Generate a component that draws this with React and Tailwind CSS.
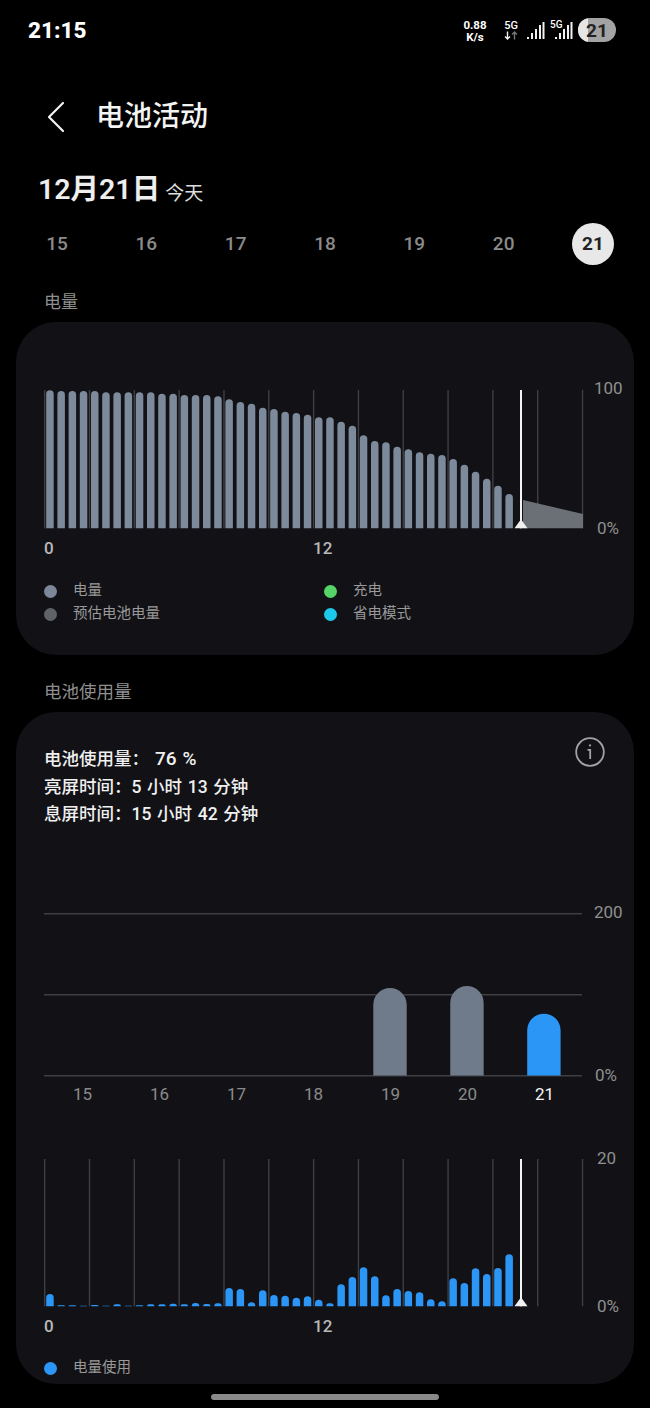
const levelTops = [60, 62, 62, 62, 62, 66, 66, 66, 66, 66, 70, 70, 74, 74, 74, 78, 87, 95, 100, 112, 116, 124, 128, 133, 141, 141, 154, 166, 195, 212, 216, 229, 237, 246, 250, 254, 266, 283, 304, 325, 346, 371];
const usageTops = [433, 467, 467, 468, 466, 468, 464, 468, 467, 464, 464, 462, 464, 460, 463, 461, 415, 418, 458, 422, 436, 438, 444, 440, 450, 461, 404, 382, 353, 380, 437, 418, 424, 428, 449, 455, 386, 400, 356, 373, 355, 314];
const days = ["15", "16", "17", "18", "19", "20"];
const weekBars = [
  { label: "15" },
  { label: "16" },
  { label: "17" },
  { label: "18" },
  { label: "19", top: 76, color: "#6f7b8b" },
  { label: "20", top: 74, color: "#6f7b8b" },
  { label: "21", top: 101.7, color: "#2b96f5" },
];

// rounded top bar, x/base in svg coords
function barPath(x, w, top, base) {
  const r = Math.min(w / 2, base - top);
  return `M${x} ${base}V${top + r}A${r} ${r} 0 0 1 ${x + r} ${top}H${x + w - r}A${r} ${r} 0 0 1 ${x + w} ${top + r}V${base}Z`;
}

function Signal() {
  return (
    <svg width="18" height="18" viewBox="0 0 18 18" fill="#f2f2f2">
      <rect x="0" y="15" width="2" height="2" />
      <rect x="4" y="11" width="2" height="6" />
      <rect x="8" y="7" width="2" height="10" />
      <rect x="12" y="3" width="2" height="14" />
      <rect x="15.5" y="0" width="2" height="17" />
    </svg>
  );
}

function StatusBar() {
  return (
    <div className="flex h-[60px] items-center justify-between pl-[28px] pr-[34px]">
      <span className="text-[22.5px] font-extrabold leading-none text-white">21:15</span>
      <div className="flex items-center">
        <div className="mt-[1px] flex w-[30px] flex-col items-center text-[11.5px] font-bold leading-[12px] text-white">
          <span>0.88</span>
          <span>K/s</span>
        </div>
        <div className="ml-[14px] flex w-[14px] flex-col items-center">
          <span className="text-[11px] font-medium leading-[11px] text-white">5G</span>
          <svg width="14" height="9" viewBox="0 0 14 9" fill="none" strokeWidth="1.4">
            <path d="M3.5 0.5V8M1 5.5L3.5 8L6 5.5" stroke="#f2f2f2" />
            <path d="M10.5 8.5V1M8 3.5L10.5 1L13 3.5" stroke="#777" />
          </svg>
        </div>
        <div className="ml-[9px] mt-[2px]">
          <Signal />
        </div>
        <div className="relative ml-[10px] mt-[2px] w-[18px]">
          <span className="absolute -left-[5px] -top-[2px] text-[10px] font-medium leading-[10px] text-white">5G</span>
          <Signal />
        </div>
        <div className="relative ml-[5px] flex h-[24px] w-[38px] items-center justify-center overflow-hidden rounded-full bg-[#a3a3a3]">
          <div className="absolute inset-y-0 left-0 w-[10px] bg-[#e6e6e6]" />
          <span className="relative text-[19px] font-bold leading-none text-[#222]">21</span>
        </div>
      </div>
    </div>
  );
}

function LevelChart() {
  const base = 138.3;
  return (
    <svg width="545" height="142" viewBox="0 0 545 142" className="block">
      {Array.from({ length: 13 }, (_, i) => (
        <rect key={i} x={i * 44.82} y="0" width="1.4" height={base} fill="#3f3f43" />
      ))}
      <path d={`M479 ${110}L539 ${124}V${base}H479Z`} fill="#6b7077" />
      {levelTops.map((t, i) => (
        <path key={i} d={barPath(2.2 + i * 11.2, 7.5, (t - 60) / 3 + 0.3, base)} fill="#7c8a9b" />
      ))}
      <rect x="476" y="-1" width="2" height={base + 1} fill="#f4f4f4" />
      <path d={`M470.5 ${base}L477 ${base - 9}L483.5 ${base}Z`} fill="#f0f0f0" />
    </svg>
  );
}

function UsageChart() {
  const base = 147.3;
  return (
    <svg width="545" height="149" viewBox="0 0 545 149" className="block">
      {Array.from({ length: 13 }, (_, i) => (
        <rect key={i} x={i * 44.82} y="0" width="1.4" height={base} fill="#3f3f43" />
      ))}
      {usageTops.map((t, i) => (
        <path key={i} d={barPath(2.2 + i * 11.2, 7.5, (t - 28) / 3, base)} fill="#2b96f5" />
      ))}
      <rect x="476" y="0" width="2" height={base} fill="#f4f4f4" />
      <path d={`M470.5 ${base}L477 ${base - 9}L483.5 ${base}Z`} fill="#f0f0f0" />
    </svg>
  );
}

function WeekChart() {
  return (
    <svg width="539" height="165" viewBox="0 0 539 165" className="block">
      <rect x="0" y="1" width="538" height="1.5" fill="#3f3f43" />
      <rect x="0" y="82" width="538" height="1.5" fill="#3f3f43" />
      <rect x="0" y="163" width="538" height="1.5" fill="#3f3f43" />
      {weekBars.map((b, i) =>
        b.top ? <path key={b.label} d={barPath(21.5 + i * 76.95, 33.4, b.top, 163.5)} fill={b.color} /> : null
      )}
    </svg>
  );
}

function LegendItem({ color, label }) {
  return (
    <div className="flex h-[23px] items-center">
      <span className="h-[13px] w-[13px] rounded-full" style={{ backgroundColor: color }} />
      <span className="ml-[16px] text-[14.5px] leading-none text-[#999]">{label}</span>
    </div>
  );
}

export default function App() {
  return (
    <div className="flex h-[1408px] w-[650px] flex-col overflow-hidden bg-black font-['Roboto','Noto_Sans_CJK_SC',sans-serif]">
      <StatusBar />

      <div className="mt-[29px] flex h-[56px] items-center pl-[46px]">
        <svg width="20" height="32" viewBox="0 0 20 32" fill="none">
          <path d="M17 2L3 16L17 30" stroke="#f2f2f2" strokeWidth="2.2" strokeLinecap="round" strokeLinejoin="round" />
        </svg>
        <h1 className="ml-[30px] text-[28px] font-medium leading-none text-[#f4f4f4]">电池活动</h1>
      </div>

      <div className="mt-[24px] flex h-[42px] items-end pl-[38px]">
        <span className="text-[28.5px] font-semibold leading-[42px] text-[#eeeeee]">12月21日</span>
        <span className="mb-[4px] ml-[5px] text-[19px] leading-[26px] text-[#dddddd]">今天</span>
      </div>

      <div className="mt-[12px] flex items-center justify-between pl-[36px] pr-[36px]">
        {days.map((d) => (
          <span key={d} className="w-[42px] text-center text-[19px] font-medium text-[#8b8b8b]">{d}</span>
        ))}
        <span className="flex h-[42px] w-[42px] items-center justify-center rounded-full bg-[#e8e8e8] text-[19px] font-bold text-[#222]">21</span>
      </div>

      <div className="mt-[26px] pl-[44px] text-[17px] leading-[22px] text-[#8f8f8f]">电量</div>

      <section className="mx-[16px] mt-[9px] h-[333px] rounded-[40px] bg-[#121216] pl-[28px] pt-[68px]">
        <div className="flex">
          <LevelChart />
          <div className="ml-[5px] flex h-[160px] -translate-y-[12px] flex-col justify-between text-[17px] leading-[20px] text-[#8f8f8f]">
            <span>100</span>
            <span className="pl-[3px]">0%</span>
          </div>
        </div>
        <div className="-mt-[12px] flex text-[17px] font-medium leading-[20px] text-[#b9b9b9]">
          <span className="w-[269px]">0</span>
          <span>12</span>
        </div>
        <div className="mt-[22px] grid w-[560px] grid-cols-[280px_1fr]">
          <LegendItem color="#7c8799" label="电量" />
          <LegendItem color="#55d468" label="充电" />
          <LegendItem color="#5f6368" label="预估电池电量" />
          <LegendItem color="#1cc8ec" label="省电模式" />
        </div>
      </section>

      <div className="mt-[26px] pl-[44px] text-[17.5px] leading-[22px] text-[#8f8f8f]">电池使用量</div>

      <section className="mx-[16px] mt-[9px] h-[672px] rounded-[40px] bg-[#121216] pl-[28px] pt-[34px]">
        <div className="flex items-start justify-between pr-[29px]">
          <div className="h-[82px] text-[17.5px] font-medium leading-[27.5px] text-[#f0f0f0] [word-spacing:1.3px]">
            <p className="h-[27.5px]">电池使用量：<span className="ml-[6px] text-[19px] leading-none">76 %</span></p>
            <p className="h-[27.5px]">亮屏时间：5 小时 13 分钟</p>
            <p className="h-[27.5px]">息屏时间：15 小时 42 分钟</p>
          </div>
          <svg width="30" height="30" viewBox="0 0 30 30" fill="none" className="-mt-[9px]" stroke="#a3a3a3" strokeWidth="1.8">
            <circle cx="15" cy="15" r="13.8" />
            <path d="M12.5 12.8H15.2V22" />
            <circle cx="15" cy="8.4" r="1.1" fill="#a3a3a3" stroke="none" />
          </svg>
        </div>

        <div className="mt-[84px] flex">
          <WeekChart />
          <div className="ml-[11px] flex h-[183px] -translate-y-[10px] flex-col justify-between text-[17px] leading-[20px] text-[#8f8f8f]">
            <span>200</span>
            <span className="pl-[1px]">0%</span>
          </div>
        </div>
        <div className="-mt-[11px] grid w-[539px] grid-cols-7 text-[17px] leading-[20px]">
          {weekBars.map((b) => (
            <span key={b.label} className={b.label === "21" ? "text-center text-[#f4f4f4]" : "text-center text-[#8a8a8a]"}>{b.label}</span>
          ))}
        </div>

        <div className="mt-[55px] flex">
          <UsageChart />
          <div className="ml-[5px] flex h-[168px] -translate-y-[11px] flex-col justify-between text-[17px] leading-[20px] text-[#8f8f8f]">
            <span className="pl-[3px]">20</span>
            <span className="pl-[3px]">0%</span>
          </div>
        </div>
        <div className="-mt-[11px] flex text-[17px] font-medium leading-[20px] text-[#b9b9b9]">
          <span className="w-[269px]">0</span>
          <span>12</span>
        </div>
        <div className="mt-[21px]">
          <LegendItem color="#2b96f5" label="电量使用" />
        </div>
      </section>

      <div className="mx-auto mt-[10px] h-[6px] w-[228px] rounded-full bg-[#8a8a8a]" />
    </div>
  );
}
